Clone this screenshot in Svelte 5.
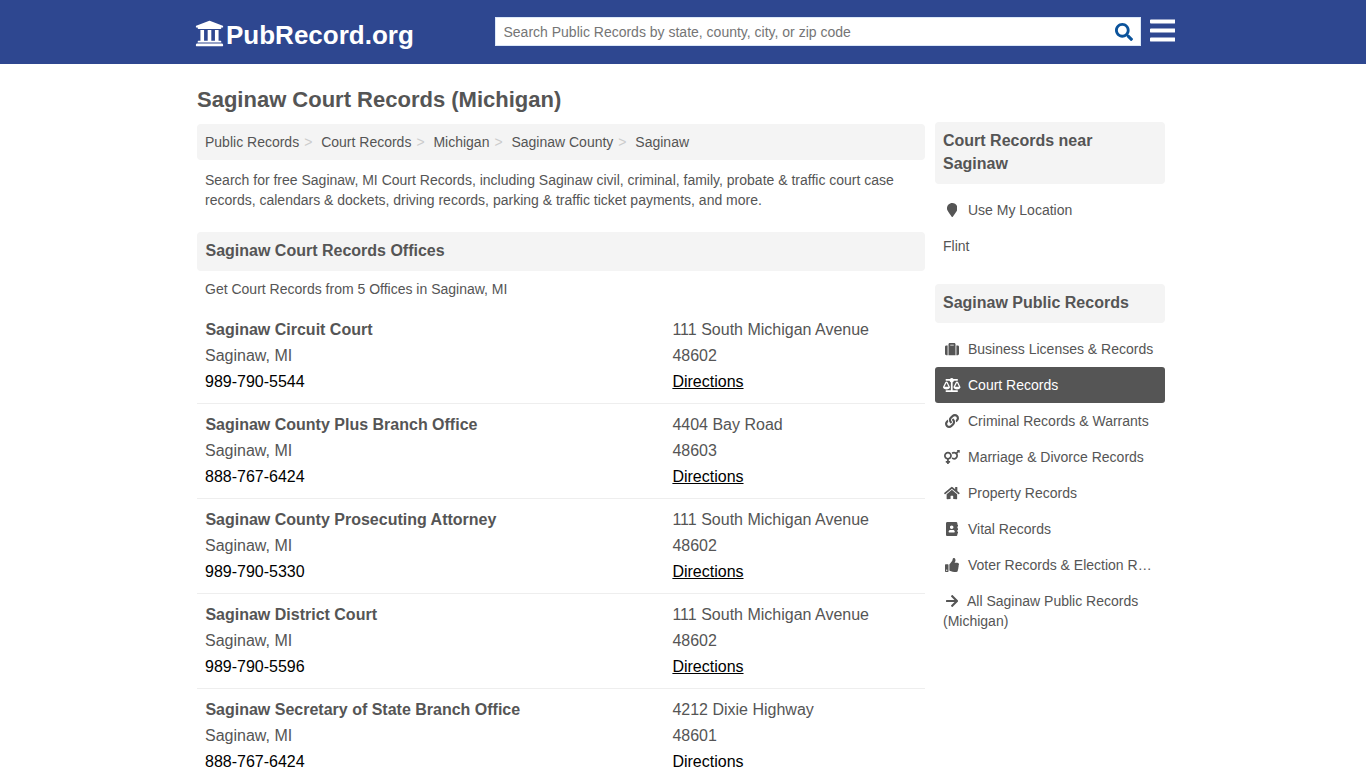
<script>
  const paths = {
    university: [512, 'M496 128v16a8 8 0 0 1-8 8h-24v12c0 6.627-5.373 12-12 12H60c-6.627 0-12-5.373-12-12v-12H24a8 8 0 0 1-8-8v-16a8 8 0 0 1 4.941-7.392l232-88a7.996 7.996 0 0 1 6.118 0l232 88A8 8 0 0 1 496 128zm-24 304H40c-13.255 0-24 10.745-24 24v16a8 8 0 0 0 8 8h464a8 8 0 0 0 8-8v-16c0-13.255-10.745-24-24-24zM96 192v192H60c-6.627 0-12 5.373-12 12v20h416v-20c0-6.627-5.373-12-12-12h-36V192h-64v192h-64V192h-64v192h-64V192H96z'],
    search: [512, 'M505 442.7L405.3 343c-4.5-4.5-10.6-7-17-7H372c27.6-35.3 44-79.7 44-128C416 93.1 322.9 0 208 0S0 93.1 0 208s93.1 208 208 208c48.3 0 92.7-16.4 128-44v16.3c0 6.4 2.5 12.5 7 17l99.7 99.7c9.4 9.4 24.6 9.4 33.9 0l28.3-28.3c9.4-9.4 9.4-24.6.1-34zM208 336c-70.7 0-128-57.2-128-128 0-70.7 57.2-128 128-128 70.7 0 128 57.2 128 128 0 70.7-57.2 128-128 128z'],
    bars: [448, 'M16 132h416c8.837 0 16-7.163 16-16V76c0-8.837-7.163-16-16-16H16C7.163 60 0 67.163 0 76v40c0 8.837 7.163 16 16 16zm0 160h416c8.837 0 16-7.163 16-16v-40c0-8.837-7.163-16-16-16H16c-8.837 0-16 7.163-16 16v40c0 8.837 7.163 16 16 16zm0 160h416c8.837 0 16-7.163 16-16v-40c0-8.837-7.163-16-16-16H16c-8.837 0-16 7.163-16 16v40c0 8.837 7.163 16 16 16z'],
    marker: [384, 'M172.268 501.67C26.97 291.031 0 269.413 0 192 0 85.961 85.961 0 192 0s192 85.961 192 192c0 77.413-26.97 99.031-172.268 309.67-9.535 13.774-29.93 13.773-39.464 0z'],
    suitcase: [512, 'M128 480h256V80c0-26.5-21.5-48-48-48H176c-26.5 0-48 21.5-48 48v400zm64-384h128v32H192V96zm320 80v256c0 26.5-21.5 48-48 48h-48V128h48c26.5 0 48 21.5 48 48zM96 480H48c-26.5 0-48-21.5-48-48V176c0-26.5 21.5-48 48-48h48v352z'],
    scale: [640, 'M256 336h-.02c0-16.18 1.34-8.73-85.05-181.51-17.65-35.29-68.19-35.36-85.87 0C-2.06 328.75.02 320.33.02 336H0c0 44.18 57.31 80 128 80s128-35.82 128-80zM128 176l72 144H56l72-144zm511.98 160c0-16.18 1.34-8.73-85.05-181.51-17.65-35.29-68.19-35.36-85.87 0-87.12 174.26-85.04 165.84-85.04 181.51H384c0 44.18 57.31 80 128 80s128-35.82 128-80h-.02zM440 320l72-144 72 144H440zm88 128H352V153.25c23.51-10.29 41.16-31.48 46.39-57.25H528c8.84 0 16-7.16 16-16V48c0-8.84-7.16-16-16-16H383.64C369.04 12.68 346.09 0 320 0s-49.04 12.68-63.64 32H112c-8.84 0-16 7.16-16 16v32c0 8.84 7.16 16 16 16h129.61c5.23 25.76 22.87 46.96 46.39 57.25V448H112c-8.84 0-16 7.16-16 16v32c0 8.84 7.16 16 16 16h416c8.84 0 16-7.16 16-16v-32c0-8.84-7.16-16-16-16z'],
    link: [512, 'M326.612 185.391c59.747 59.809 58.927 155.698.36 214.59-.11.12-.24.25-.36.37l-67.2 67.2c-59.27 59.27-155.699 59.262-214.96 0-59.27-59.26-59.27-155.7 0-214.96l37.106-37.106c9.84-9.84 26.786-3.3 27.294 10.606.648 17.722 3.826 35.527 9.69 52.721 1.986 5.822.567 12.262-3.783 16.612l-13.087 13.087c-28.026 28.026-28.905 73.66-1.155 101.96 28.024 28.579 74.086 28.749 102.325.51l67.2-67.19c28.191-28.191 28.073-73.757 0-101.83-3.701-3.694-7.429-6.564-10.341-8.569a16.037 16.037 0 0 1-6.947-12.606c-.396-10.567 3.348-21.456 11.698-29.806l21.054-21.055c5.521-5.521 14.182-6.199 20.584-1.731a152.482 152.482 0 0 1 20.522 17.197zM467.547 44.449c-59.261-59.262-155.69-59.27-214.96 0l-67.2 67.2c-.12.12-.25.25-.36.37-58.566 58.892-59.387 154.781.36 214.59a152.454 152.454 0 0 0 20.521 17.196c6.402 4.468 15.064 3.789 20.584-1.731l21.054-21.055c8.35-8.35 12.094-19.239 11.698-29.806a16.037 16.037 0 0 0-6.947-12.606c-2.912-2.005-6.64-4.875-10.341-8.569-28.073-28.073-28.191-73.639 0-101.83l67.2-67.19c28.239-28.239 74.3-28.069 102.325.51 27.75 28.3 26.872 73.934-1.155 101.96l-13.087 13.087c-4.35 4.35-5.769 10.79-3.783 16.612 5.864 17.194 9.042 34.999 9.69 52.721.509 13.906 17.454 20.446 27.294 10.606l37.106-37.106c59.271-59.259 59.271-155.699.001-214.959z'],
    venusMars: [576, 'M564 0h-79c-10.7 0-16 12.9-8.5 20.5l16.9 16.9-48.7 48.7C422.5 72.1 396.2 64 368 64c-33.7 0-64.6 11.6-89.2 30.9 14 16.7 25 36 32.1 57.1 14.5-14.8 34.7-24 57.1-24 44.1 0 80 35.9 80 80s-35.9 80-80 80c-22.3 0-42.6-9.2-57.1-24-7.1 21.1-18 40.4-32.1 57.1 24.5 19.4 55.5 30.9 89.2 30.9 79.5 0 144-64.5 144-144 0-28.2-8.1-54.5-22.1-76.7l48.7-48.7 16.9 16.9c2.4 2.4 5.4 3.5 8.4 3.5 6.2 0 12.1-4.8 12.1-12V12c0-6.6-5.4-12-12-12zM144 64C64.5 64 0 128.5 0 208c0 68.5 47.9 125.9 112 140.4V400H76c-6.6 0-12 5.4-12 12v40c0 6.6 5.4 12 12 12h36v36c0 6.6 5.4 12 12 12h40c6.6 0 12-5.4 12-12v-36h36c6.6 0 12-5.4 12-12v-40c0-6.6-5.4-12-12-12h-36v-51.6c64.1-14.6 112-71.9 112-140.4 0-79.5-64.5-144-144-144zm0 224c-44.1 0-80-35.9-80-80s35.9-80 80-80 80 35.9 80 80-35.9 80-80 80z'],
    home: [576, 'M280.37 148.26L96 300.11V464a16 16 0 0 0 16 16l112.06-.29a16 16 0 0 0 15.92-16V368a16 16 0 0 1 16-16h64a16 16 0 0 1 16 16v95.64a16 16 0 0 0 16 16.05L464 480a16 16 0 0 0 16-16V300L295.67 148.26a12.19 12.19 0 0 0-15.3 0zM571.6 251.47L488 182.56V44.05a12 12 0 0 0-12-12h-56a12 12 0 0 0-12 12v72.61L318.47 43a48 48 0 0 0-61 0L4.34 251.47a12 12 0 0 0-1.6 16.9l25.5 31A12 12 0 0 0 45.15 301l235.22-193.74a12.19 12.19 0 0 1 15.3 0L530.9 301a12 12 0 0 0 16.9-1.6l25.5-31a12 12 0 0 0-1.7-16.93z'],
    addressBook: [448, 'M436 160c6.6 0 12-5.4 12-12v-40c0-6.6-5.4-12-12-12h-20V48c0-26.5-21.5-48-48-48H48C21.5 0 0 21.5 0 48v416c0 26.5 21.5 48 48 48h320c26.5 0 48-21.5 48-48v-48h20c6.6 0 12-5.4 12-12v-40c0-6.6-5.4-12-12-12h-20v-64h20c6.6 0 12-5.4 12-12v-40c0-6.6-5.4-12-12-12h-20v-64h20zm-228-32c35.3 0 64 28.7 64 64s-28.7 64-64 64-64-28.7-64-64 28.7-64 64-64zm112 236.8c0 10.6-10 19.2-22.4 19.2H118.4C106 384 96 375.4 96 364.8v-19.2c0-31.8 30.1-57.6 67.2-57.6h5c12.3 5.1 25.7 8 39.8 8s27.6-2.9 39.8-8h5c37.1 0 67.2 25.8 67.2 57.6v19.2z'],
    thumbsUp: [512, 'M104 224H24c-13.255 0-24 10.745-24 24v240c0 13.255 10.745 24 24 24h80c13.255 0 24-10.745 24-24V248c0-13.255-10.745-24-24-24zM64 472c-13.255 0-24-10.745-24-24s10.745-24 24-24 24 10.745 24 24-10.745 24-24 24zM384 81.452c0 42.416-25.97 66.208-33.277 94.548h101.723c33.397 0 59.397 27.746 59.553 58.098.084 17.938-7.546 37.249-19.439 49.197l-.11.11c9.836 23.337 8.237 56.037-9.308 79.469 8.681 25.895-.069 57.704-16.382 74.757 4.298 17.598 2.244 32.575-6.148 44.632C440.202 511.587 389.616 512 346.839 512l-2.845-.001c-48.287-.017-87.806-17.598-119.56-31.725-15.957-7.099-36.821-15.887-52.651-16.178-6.54-.12-11.783-5.457-11.783-11.998v-213.77c0-3.2 1.282-6.271 3.558-8.521 39.614-39.144 56.648-80.587 89.117-113.111 14.804-14.832 20.188-37.236 25.393-58.902C282.515 39.293 291.817 0 312 0c24 0 72 8 72 81.452z'],
    arrowRight: [448, 'M190.5 66.9l22.2-22.2c9.4-9.4 24.6-9.4 33.9 0L441 239c9.4 9.4 9.4 24.6 0 33.9L246.6 467.3c-9.4 9.4-24.6 9.4-33.9 0l-22.2-22.2c-9.5-9.5-9.3-25 .4-34.3L311.4 296H24c-13.3 0-24-10.7-24-24v-32c0-13.3 10.7-24 24-24h287.4L190.9 101.2c-9.8-9.3-10-24.8-.4-34.3z']
  };

  const crumbs = ['Public Records', 'Court Records', 'Michigan', 'Saginaw County', 'Saginaw'];

  const offices = [
    ['Saginaw Circuit Court', '989-790-5544', '111 South Michigan Avenue', '48602'],
    ['Saginaw County Plus Branch Office', '888-767-6424', '4404 Bay Road', '48603'],
    ['Saginaw County Prosecuting Attorney', '989-790-5330', '111 South Michigan Avenue', '48602'],
    ['Saginaw District Court', '989-790-5596', '111 South Michigan Avenue', '48602'],
    ['Saginaw Secretary of State Branch Office', '888-767-6424', '4212 Dixie Highway', '48601']
  ];

  const categories = [
    ['suitcase', 'Business Licenses & Records'],
    ['scale', 'Court Records'],
    ['link', 'Criminal Records & Warrants'],
    ['venusMars', 'Marriage & Divorce Records'],
    ['home', 'Property Records'],
    ['addressBook', 'Vital Records'],
    ['thumbsUp', 'Voter Records & Election Records']
  ];
</script>

{#snippet icon(name)}
  <svg class="icon" viewBox="0 0 {paths[name][0]} 512" aria-hidden="true"><path d={paths[name][1]} /></svg>
{/snippet}

<div class="page">
  <header>
    <div class="wrap bar">
      <a class="logo" href="#top">{@render icon('university')}<span>PubRecord.org</span></a>
      <div class="search">
        <input type="text" placeholder="Search Public Records by state, county, city, or zip code" />
        <button class="go" aria-label="Search">{@render icon('search')}</button>
      </div>
      <button class="menu" aria-label="Menu">{@render icon('bars')}</button>
    </div>
  </header>

  <div class="wrap">
    <h1>Saginaw Court Records (Michigan)</h1>
    <div class="columns">
      <main>
        <ol class="crumbs">
          {#each crumbs as crumb}<li>{crumb}</li>{/each}
        </ol>
        <p class="intro">Search for free Saginaw, MI Court Records, including Saginaw civil, criminal, family, probate &amp; traffic court case records, calendars &amp; dockets, driving records, parking &amp; traffic ticket payments, and more.</p>
        <h2>Saginaw Court Records Offices</h2>
        <p class="count">Get Court Records from 5 Offices in Saginaw, MI</p>
        {#each offices as [name, phone, street, zip]}
          <section class="office">
            <div>
              <strong>{name}</strong>
              <div>Saginaw, MI</div>
              <a class="phone" href="#call">{phone}</a>
            </div>
            <div>
              <div>{street}</div>
              <div>{zip}</div>
              <a class="directions" href="#map">Directions</a>
            </div>
          </section>
        {/each}
      </main>

      <aside>
        <h2>Court Records near Saginaw</h2>
        <nav class="near">
          <a href="#near"><span class="slot">{@render icon('marker')}</span>Use My Location</a>
          <a href="#flint">Flint</a>
        </nav>
        <h2>Saginaw Public Records</h2>
        <nav>
          {#each categories as [glyph, label]}
            <a class:active={glyph === 'scale'} href="#category"><span class="slot">{@render icon(glyph)}</span>{label}</a>
          {/each}
          <a class="all" href="#all"><span class="slot">{@render icon('arrowRight')}</span>All Saginaw Public Records (Michigan)</a>
        </nav>
      </aside>
    </div>
  </div>
</div>

<style>
  :global(body) {
    overflow: hidden;
  }
  .page {
    height: 768px;
    overflow: hidden;
    background: #fff;
    color: #555;
    font: 14px/20px "Liberation Sans", Arial, sans-serif;
  }
  * {
    box-sizing: border-box;
  }
  a {
    color: inherit;
    text-decoration: none;
  }
  .icon {
    height: 1em;
    fill: currentColor;
    display: block;
  }
  header {
    height: 64px;
    background: #2e4790;
  }
  .wrap {
    width: 968px;
    margin: 0 0 0 197px;
  }
  .bar {
    display: flex;
    width: 980px;
    align-items: flex-start;
  }
  .logo {
    display: flex;
    width: 298px;
    margin-top: 20px;
    color: #fff;
    font-size: 26px;
    line-height: 30px;
    font-weight: bold;
  }
  .logo .icon {
    width: 29px;
    height: 29px;
    margin: -1px 2.5px 0 -2.5px;
  }
  .search {
    display: flex;
    width: 646px;
    height: 29px;
    margin-top: 17px;
    background: #fff;
    border: 1px solid #dce8f8;
  }
  input {
    flex: 1;
    padding: 0 7.5px;
    border: 0;
    background: none;
    font: inherit;
  }
  input::placeholder {
    color: #757575;
  }
  button {
    border: 0;
    padding: 0;
    background: none;
  }
  .go {
    width: 25px;
    color: #0b539b;
    font-size: 18px;
  }
  .menu {
    margin: 16px 0 0 9px;
    color: #fff;
    font-size: 29px;
  }
  h1 {
    margin: 0;
    padding-top: 22px;
    height: 60px;
    font-size: 22px;
    line-height: 28px;
  }
  .columns {
    display: flex;
    gap: 10px;
  }
  main {
    width: 728px;
  }
  .crumbs {
    display: flex;
    margin: 0;
    padding: 8px;
    list-style: none;
    background: #f4f4f4;
    border-radius: 4px;
  }
  .crumbs li + li::before {
    content: ">";
    padding: 0 8.8px 0 5px;
    color: #ccc;
  }
  .intro {
    margin: 0;
    padding: 10px 8px 22px;
  }
  h2 {
    margin: 0;
    padding: 7px 8px 9px;
    background: #f4f4f4;
    border-radius: 4px;
    font-size: 16px;
    line-height: 23px;
  }
  main h2 {
    padding: 7px 8.5px 9px;
  }
  .count {
    margin: 0;
    padding: 8px 8px 10px;
  }
  .office {
    display: grid;
    grid-template-columns: 467.4px 1fr;
    height: 95px;
    padding: 8px 8px 0;
    border-bottom: 1px solid #eee;
    font-size: 16px;
    line-height: 26px;
  }
  .office strong,
  .office a {
    display: block;
  }
  .office strong {
    padding-left: 0.4px;
  }
  .office a {
    color: #000;
  }
  .office .directions {
    text-decoration: underline;
  }
  aside {
    width: 230px;
    margin-top: -2px;
  }
  nav {
    padding-top: 8px;
  }
  .near {
    padding-bottom: 20px;
  }
  nav a {
    display: block;
    padding: 8px;
    border-radius: 3px;
    overflow: hidden;
    white-space: nowrap;
    text-overflow: ellipsis;
  }
  nav a.active {
    color: #fff;
    background: #555;
  }
  nav a.all {
    white-space: normal;
  }
  .slot {
    display: inline-flex;
    width: 18px;
    margin-right: 7px;
    justify-content: center;
    vertical-align: -2px;
  }
  .all .slot {
    margin-right: 6px;
  }
</style>
